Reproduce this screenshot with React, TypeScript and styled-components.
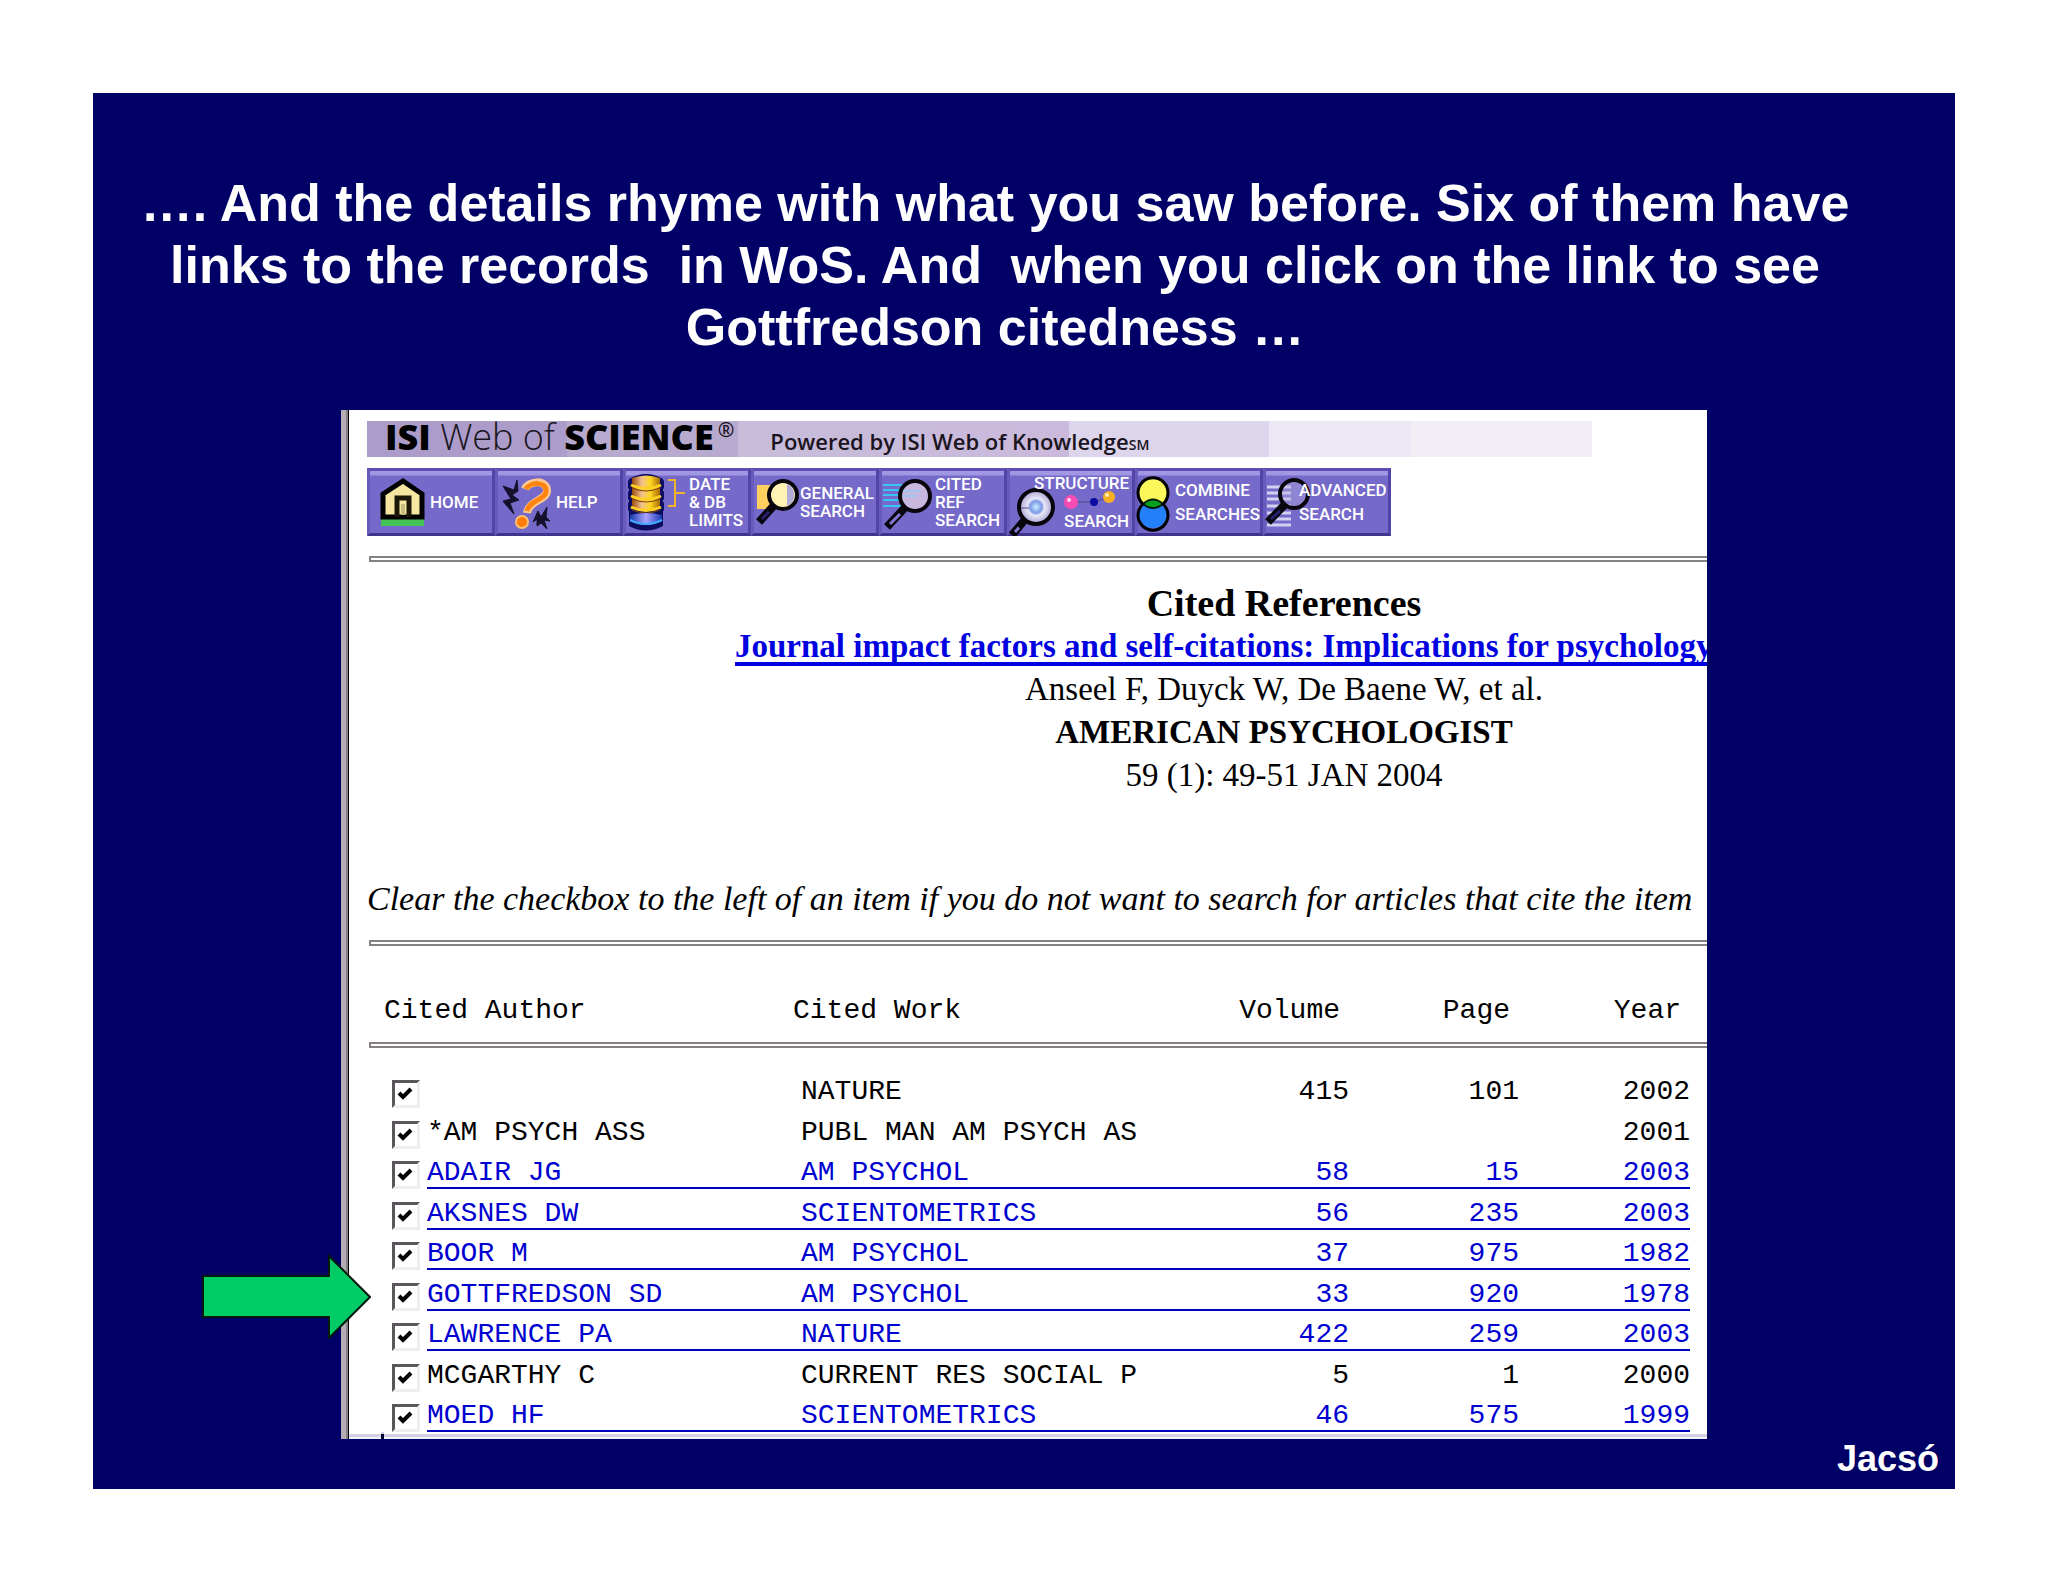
import React from "react";
import styled, { createGlobalStyle } from "styled-components";

const GlobalStyle = createGlobalStyle`
  *, *::before, *::after { box-sizing: border-box; }
  body { margin: 0; background: #fff; }
`;

const serif = `"Liberation Serif", "Times New Roman", serif`;
const sans = `"Liberation Sans", Arial, sans-serif`;
const mono = `"Liberation Mono", "Courier New", monospace`;

const Page = styled.main`
  padding: 93px;
`;

const Slide = styled.section`
  background: #000066;
  color: #fff;
  font-family: ${sans};
  font-weight: bold;
  padding: 79px 0 10px;
`;

const Title = styled.h1`
  margin: 0 88px 52px 30px;
  font-size: 52px;
  line-height: 62px;
  text-align: center;
`;

const Stage = styled.div`
  position: relative;
  margin: 0 248px;
`;

const Screen = styled.div`
  overflow: hidden;
  padding: 11px 0 0 26px;
  color: #000;
  font-weight: normal;
  background: linear-gradient(to right, #b5adb5 5px, #848084 5px, #848084 7px, #000 7px, #000 8px, #fff 8px);
`;

const Banner = styled.header`
  display: flex;
  align-items: baseline;
  height: 36px;
  margin-right: 115px;
  padding-left: 18px;
  line-height: 32px;
  white-space: nowrap;
  font-family: "Open Sans", sans-serif;
  background: linear-gradient(
    to right,
    #ab9cc9 200px, #b8a9cf 200px, #b8a9cf 371px, #c6bcd9 371px, #cbb9dc 702px,
    #ddd5ec 702px, #ddd5ec 902px, #ece6f5 902px, #ece6f5 1044px, #f3eef6 1044px
  );
`;

const Brand = styled.span`
  font-size: 36px;
  font-weight: 300;
  color: #1a1420;

  b { font-weight: 800; color: #000; }
  sup { font-size: 20px; line-height: 0; font-weight: 600; margin-left: 4px; }
`;

const Powered = styled.span`
  margin-left: 36px;
  font-size: 22px;
  font-weight: 600;
  font-family: "Open Sans", sans-serif;
  color: #1a1420;

  small { font-size: 14px; }
`;

const Toolbar = styled.nav`
  display: flex;
  margin-top: 11px;
`;

const ToolButton = styled.button<{ $indent: number; $leading: number }>`
  position: relative;
  display: flex;
  align-items: center;
  width: 128px;
  height: 68px;
  padding: 0 0 0 ${(p) => p.$indent}px;
  border: 3px solid;
  border-color: #5b4eb4 #5345a8 #40348f #685bbd;
  margin: 0;
  background: linear-gradient(to bottom, #a297e2 4px, #7569c9 5px);
  color: #fff;
  font: 500 17px/${(p) => p.$leading}px Roboto, sans-serif;
  text-align: left;
  white-space: nowrap;
`;

const Art = styled.svg`
  position: absolute;
  left: -3px;
  top: -3px;
  width: 128px;
  height: 68px;
`;

const Caption = styled.span<{ $end?: boolean }>`
  position: relative;
  display: flex;
  flex-direction: column;
  align-items: ${(p) => (p.$end ? "flex-end" : "flex-start")};
`;

const Rule = styled.hr`
  height: 6px;
  margin: 20px 0 0 2px;
  border: 2px solid #848084;
  border-right: 0;
  background: #fff;
`;

const Record = styled.div`
  display: flex;
  flex-direction: column;
  align-items: center;
  width: 1098px;
  margin: 20px 0 80px 368px;
  font: 33px/43px ${serif};
  white-space: nowrap;
`;

const Heading = styled.h2`
  margin: 0;
  font-size: 38px;
  line-height: 43px;
`;

const TitleLink = styled.a`
  align-self: flex-start;
  color: #0000e0;
  font-weight: bold;
  text-decoration: underline 4px;
  text-underline-offset: 5px;
  text-decoration-skip-ink: none;
`;

const Hint = styled.p`
  margin: 0;
  font: italic 34px/43px ${serif};
  white-space: nowrap;
`;

const References = styled.table`
  width: 100%;
  table-layout: fixed;
  border-collapse: collapse;
  font: 28px/28px ${mono};
  white-space: pre;

  th, td { padding: 0; }
`;

const HeadCell = styled.th<{ $right?: boolean; $indent?: number }>`
  && { padding: 49px ${(p) => (p.$right ? 9 : 0)}px 15px ${(p) => p.$indent ?? 0}px; }
  font-weight: normal;
  line-height: 32px;
  text-align: ${(p) => (p.$right ? "right" : "left")};
`;

const RuleCell = styled.td`
  && { padding-bottom: 20px; }
  ${Rule} { margin-top: 0; }
`;

const Row = styled.tr`
  height: 40px;
  &:nth-child(even) { height: 41px; }
  vertical-align: bottom;
`;

const Entry = styled.span<{ $right?: boolean; $indent?: number }>`
  display: block;
  padding-left: ${(p) => p.$indent ?? 0}px;
  text-align: ${(p) => (p.$right ? "right" : "left")};
  border-bottom: 2px solid transparent;
  min-height: 30px;
`;

const EntryLink = styled(Entry)`
  color: #0000d0;
  text-decoration: none;
  border-bottom-color: #0000c0;
`;

const Tick = styled.input`
  appearance: none;
  display: block;
  width: 28px;
  height: 28px;
  margin: 0 0 0 25px;
  border: 3px solid;
  border-color: #5a565c #f0eeea #f0eeea #5a565c;
  background: #fff;

  &:checked {
    background: #fff url("data:image/svg+xml,%3Csvg xmlns='http://www.w3.org/2000/svg' viewBox='0 0 22 22'%3E%3Cpath d='M4 10l4 4 8-8' fill='none' stroke='%23000' stroke-width='4'/%3E%3C/svg%3E") center / 22px 22px no-repeat;
  }
`;

const StatusEdge = styled.div`
  height: 7px;
  margin-left: -18px;
  background: linear-gradient(to bottom, #fff 2px, #d4d0e6 2px, #d4d0e6 5px, #f4f2fa 5px);

  &::before {
    content: "";
    display: block;
    width: 3px;
    height: 7px;
    margin-left: 32px;
    background: linear-gradient(to bottom, #d4d0e6 2px, #000030 2px);
  }
`;

const Pointer = styled.svg`
  position: absolute;
  left: -140px;
  bottom: 100px;
  width: 170px;
  height: 86px;
`;

const Signature = styled.footer`
  padding-right: 16px;
  font-size: 36px;
  line-height: 40px;
  text-align: right;
`;

type LensProps = { x: number; y: number; r: number; tipX: number; tipY: number; glass: string; grip?: string };

const Lens = ({ x, y, r, tipX, tipY, glass, grip = "#8478d0" }: LensProps) => (
  <g>
    <line x1={x - r * 0.65} y1={y + r * 0.75} x2={tipX} y2={tipY} stroke="#08060c" strokeWidth="8" />
    <line x1={x - r} y1={y + r * 1.2} x2={tipX + 3} y2={tipY - 3} stroke={grip} strokeWidth="3" />
    <circle cx={x} cy={y} r={r} fill={glass} stroke="#08060c" strokeWidth="4" />
  </g>
);

const HomeArt = () => (
  <>
    <rect x="14" y="50" width="43" height="8" fill="#43c255" />
    <path d="M16 49V26L36 13l19 13v23z" fill="#f5e6a0" stroke="#000" strokeWidth="5" />
    <path d="M30 49V30h12v19" fill="none" stroke="#1c1808" strokeWidth="5" />
    <path d="M36 36v11" stroke="#c8bc80" strokeWidth="4" />
  </>
);

const HelpArt = () => (
  <>
    <path
      d="M8 18l11 4 3-10 1 11-6 4 7 5-9 3 4 11-8-9-3-4 8-2z"
      fill="#15102c"
      stroke="#15102c"
      strokeWidth="1"
    />
    <path
      d="M38 54l5-11 3 6 6-10-1 10 4 4-6-1 3 9-6-6-4 3v-7z"
      fill="#15102c"
      stroke="#15102c"
      strokeWidth="1"
    />
    <path d="M30 21c3-8 21-10 22 1 1 10-18 10-20 23" fill="none" stroke="#ffc890" strokeWidth="8" />
    <path d="M31 21c4-7 20-8 20 2 0 9-17 9-19 20" fill="none" stroke="#ff8410" strokeWidth="5" />
    <circle cx="27" cy="54" r="6" fill="#ff7c08" stroke="#ffc070" strokeWidth="2" />
  </>
);

const DatabaseArt = () => (
  <>
    <defs>
      <linearGradient id="gold">
        <stop offset="0" stopColor="#9a4c08" />
        <stop offset=".35" stopColor="#f0c090" />
        <stop offset=".65" stopColor="#ffd820" />
        <stop offset="1" stopColor="#a86808" />
      </linearGradient>
      <linearGradient id="azure">
        <stop offset="0" stopColor="#1a3cb0" />
        <stop offset=".5" stopColor="#a8a4ff" />
        <stop offset="1" stopColor="#1838b0" />
      </linearGradient>
    </defs>
    <path d="M6 11q17-10 34 0v47q-17 9-34 0z" fill="#0c0c60" />
    <path d="M9 10q14-5 28 0v30q-14 6-28 0z" fill="url(#gold)" />
    {[16, 27, 38].map((y) => (
      <g key={y}>
        <path d={`M5 ${y - 4}l5 4-5 5zM41 ${y - 4}l-5 4 5 5z`} fill="#0c0c60" />
        <path d={`M8 ${y + 1}q15 7 30 0`} fill="none" stroke="#ffd020" strokeWidth="3" />
        <path d={`M9 ${y + 4}q14 6 28 0`} fill="none" stroke="#804008" strokeWidth="1" />
      </g>
    ))}
    <path d="M7 47q16-4 32 0v6q-16 8-32 0z" fill="url(#azure)" />
    <path d="M7 52q16 8 32 0" fill="none" stroke="#40a8ff" strokeWidth="2" />
    <path d="M45 12h7v26h-7M52 25h10" fill="none" stroke="#f0b428" strokeWidth="2" />
  </>
);

const GeneralArt = () => (
  <>
    <rect x="6" y="17" width="14" height="24" fill="#ffd060" />
    <Lens x={32} y={27} r={14} tipX={8} tipY={54} glass="#fff2b4" grip="#28206c" />
    <path d="M36 16a12 12 0 0 1 0 22z" fill="#b4acd8" />
  </>
);

const CitedArt = () => (
  <>
    <path d="M4 17h28M4 22h24M4 27h24M4 32h24M4 38h28" stroke="#38c4f4" strokeWidth="2" />
    <Lens x={36} y={28} r={15} tipX={8} tipY={59} glass="#c8b8e0" />
    <path d="M24 23h18M24 28h14" stroke="#a0c4ec" strokeWidth="2" />
  </>
);

const StructureArt = () => (
  <>
    <defs>
      <radialGradient id="glass">
        <stop offset="0" stopColor="#c8f0ff" />
        <stop offset=".35" stopColor="#7c98e8" />
        <stop offset=".5" stopColor="#e8e8f8" />
        <stop offset="1" stopColor="#a8a0d0" />
      </radialGradient>
    </defs>
    <Lens x={29} y={39} r={17} tipX={5} tipY={67} glass="url(#glass)" />
    <path d="M14 40h8M64 34h23l15-5" fill="none" stroke="#504880" strokeWidth="1" />
    <circle cx="64" cy="34" r="7" fill="#f84cb4" />
    <circle cx="62" cy="32" r="2" fill="#ffd0f0" />
    <circle cx="87" cy="34" r="4" fill="#0c0ca0" />
    <circle cx="102" cy="29" r="6" fill="#f8b020" />
    <circle cx="100" cy="27" r="2" fill="#fff0b0" />
  </>
);

const CombineArt = () => (
  <>
    <circle cx="18" cy="46" r="14" fill="#2480f8" />
    <circle cx="18" cy="25" r="14" fill="#fcf85c" />
    <path d="M8 36q10-9 20 0-10 8-20 0z" fill="#08a020" stroke="#001c08" strokeWidth="2" />
    <path d="M8 36a15 15 0 1 1 20 0 15 15 0 1 1-20 0z" fill="none" stroke="#000" strokeWidth="3" />
  </>
);

const AdvancedArt = () => (
  <>
    <path d="M4 19h24M4 25h24M4 31h24M4 38h24M4 45h24M4 51h24M4 57h24" stroke="#d0d0f0" strokeWidth="3" />
    <Lens x={31} y={26} r={14} tipX={5} tipY={54} glass="#b8b0e066" grip="#28206c" />
  </>
);

type Tool = { art: () => React.JSX.Element; lines: string[]; indent: number; leading: number; end?: boolean };

const tools: Tool[] = [
  { art: HomeArt, lines: ["HOME"], indent: 60, leading: 18 },
  { art: HelpArt, lines: ["HELP"], indent: 58, leading: 18 },
  { art: DatabaseArt, lines: ["DATE", "& DB", "LIMITS"], indent: 63, leading: 18 },
  { art: GeneralArt, lines: ["GENERAL", "SEARCH"], indent: 46, leading: 18 },
  { art: CitedArt, lines: ["CITED", "REF", "SEARCH"], indent: 53, leading: 18 },
  { art: StructureArt, lines: ["STRUCTURE", "SEARCH"], indent: 24, leading: 38, end: true },
  { art: CombineArt, lines: ["COMBINE", "SEARCHES"], indent: 37, leading: 24 },
  { art: AdvancedArt, lines: ["ADVANCED", "SEARCH"], indent: 33, leading: 24 },
];

type Reference = { author: string; work: string; volume: string; page: string; year: string; linked?: boolean };

const references: Reference[] = [
  { author: "", work: "NATURE", volume: "415", page: "101", year: "2002" },
  { author: "*AM PSYCH ASS", work: "PUBL MAN AM PSYCH AS", volume: "", page: "", year: "2001" },
  { author: "ADAIR JG", work: "AM PSYCHOL", volume: "58", page: "15", year: "2003", linked: true },
  { author: "AKSNES DW", work: "SCIENTOMETRICS", volume: "56", page: "235", year: "2003", linked: true },
  { author: "BOOR M", work: "AM PSYCHOL", volume: "37", page: "975", year: "1982", linked: true },
  { author: "GOTTFREDSON SD", work: "AM PSYCHOL", volume: "33", page: "920", year: "1978", linked: true },
  { author: "LAWRENCE PA", work: "NATURE", volume: "422", page: "259", year: "2003", linked: true },
  { author: "MCGARTHY C", work: "CURRENT RES SOCIAL P", volume: "5", page: "1", year: "2000" },
  { author: "MOED HF", work: "SCIENTOMETRICS", volume: "46", page: "575", year: "1999", linked: true },
];

const slideTitle =
  "…. And the details rhyme with what you saw before. Six of them have links to the records\u00a0 in WoS. " +
  "And\u00a0 when you click on the link to see Gottfredson citedness …";

const ReferenceRow = ({ item }: { item: Reference }) => {
  const cell = (text: string, right = false, indent = 0) => (
    <td>
      {item.linked ? (
        <EntryLink as="a" href="#record" $right={right} $indent={indent}>{text}</EntryLink>
      ) : (
        <Entry $right={right} $indent={indent}>{text}</Entry>
      )}
    </td>
  );
  return (
    <Row>
      <td>
        <Tick type="checkbox" defaultChecked aria-label={`${item.author} ${item.work}`.trim()} />
      </td>
      {cell(item.author)}
      {cell(item.work, false, 8)}
      {cell(item.volume, true)}
      {cell(item.page, true)}
      {cell(item.year, true)}
      <td />
    </Row>
  );
};

export default function App() {
  return (
    <Page>
      <GlobalStyle />
      <Slide>
        <Title>{slideTitle}</Title>
        <Stage>
          <Screen>
            <Banner>
              <Brand>
                <b>ISI</b> Web of <b>SCIENCE</b>
                <sup>®</sup>
              </Brand>
              <Powered>
                Powered by ISI Web of Knowledge<small>SM</small>
              </Powered>
            </Banner>
            <Toolbar>
              {tools.map(({ art: Drawing, lines, indent, leading, end }) => (
                <ToolButton key={lines.join(" ")} type="button" $indent={indent} $leading={leading}>
                  <Art viewBox="0 0 128 68" aria-hidden="true">
                    <Drawing />
                  </Art>
                  <Caption $end={end}>
                    {lines.map((line) => (
                      <span key={line}>{line}</span>
                    ))}
                  </Caption>
                </ToolButton>
              ))}
            </Toolbar>
            <Rule />
            <Record>
              <Heading>Cited References</Heading>
              <TitleLink href="#article">
                Journal impact factors and self-citations: Implications for psychology
              </TitleLink>
              <span>Anseel F, Duyck W, De Baene W, et al.</span>
              <b>AMERICAN PSYCHOLOGIST</b>
              <span>59 (1): 49-51 JAN 2004</span>
            </Record>
            <Hint>
              Clear the checkbox to the left of an item if you do not want to search for articles that cite the item
            </Hint>
            <Rule />
            <References>
              <colgroup>
                <col style={{ width: 60 }} />
                <col style={{ width: 366 }} />
                <col />
                <col style={{ width: 170 }} />
                <col style={{ width: 170 }} />
                <col style={{ width: 171 }} />
                <col style={{ width: 17 }} />
              </colgroup>
              <thead>
                <tr>
                  <HeadCell colSpan={2} $indent={17}>Cited Author</HeadCell>
                  <HeadCell>Cited Work</HeadCell>
                  <HeadCell $right>Volume</HeadCell>
                  <HeadCell $right>Page</HeadCell>
                  <HeadCell $right>Year</HeadCell>
                  <HeadCell as="td" />
                </tr>
                <tr>
                  <RuleCell colSpan={7}>
                    <Rule />
                  </RuleCell>
                </tr>
              </thead>
              <tbody>
                {references.map((item) => (
                  <ReferenceRow key={item.author} item={item} />
                ))}
              </tbody>
            </References>
            <StatusEdge />
          </Screen>
          <Pointer viewBox="0 0 170 86" aria-hidden="true">
            <path d="M2 23h126V3l41 41-41 41V64H2z" fill="#00cc66" stroke="#001a0c" strokeWidth="2" />
          </Pointer>
        </Stage>
        <Signature>Jacsó</Signature>
      </Slide>
    </Page>
  );
}
